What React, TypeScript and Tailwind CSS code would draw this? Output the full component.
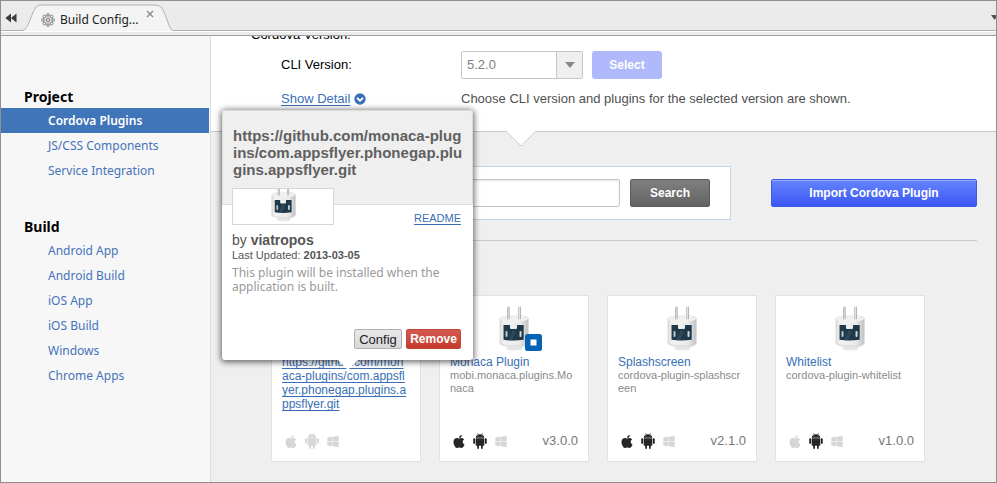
import { FaApple, FaWindows } from "react-icons/fa";

type Platform = "ios" | "android" | "windows";

interface Plugin {
  name: string;
  id?: string;
  version?: string;
  platforms: Platform[];
  official?: boolean;
  selected?: boolean;
}

const plugins: Plugin[] = [
  { name: "https://github.com/monaca-plugins/com.appsflyer.phonegap.plugins.appsflyer.git", platforms: [], selected: true },
  { name: "Monaca Plugin", id: "mobi.monaca.plugins.Monaca", version: "v3.0.0", platforms: ["ios", "android"], official: true },
  { name: "Splashscreen", id: "cordova-plugin-splashscreen", version: "v2.1.0", platforms: ["ios", "android"] },
  { name: "Whitelist", id: "cordova-plugin-whitelist", version: "v1.0.0", platforms: ["android"] },
];

const menu = [
  { title: "Project", items: ["Cordova Plugins", "JS/CSS Components", "Service Integration"] },
  { title: "Build", items: ["Android App", "Android Build", "iOS App", "iOS Build", "Windows", "Chrome Apps"] },
];

function Plug({ className }: { className: string }) {
  return (
    <svg viewBox="0 0 30 45" className={className} aria-hidden="true">
      <defs>
        <linearGradient id="plug-body" x1="0" x2="1" y1="0" y2="0">
          <stop offset="0" stopColor="#d8d8d8" />
          <stop offset="0.15" stopColor="#f2f2f2" />
          <stop offset="0.7" stopColor="#ebebeb" />
          <stop offset="1" stopColor="#c0c0c0" />
        </linearGradient>
        <linearGradient id="plug-prong" x1="0" x2="1" y1="0" y2="0">
          <stop offset="0" stopColor="#a0a0a0" />
          <stop offset="0.5" stopColor="#e6e6e6" />
          <stop offset="1" stopColor="#8f8f8f" />
        </linearGradient>
        <linearGradient id="plug-base" x1="0" x2="0" y1="0" y2="1">
          <stop offset="0" stopColor="#cccccc" />
          <stop offset="1" stopColor="#f6f6f6" />
        </linearGradient>
      </defs>
      <path d="M7 39h17l-1.500 5q-7 2-14 0z" fill="url(#plug-base)" />
      <path d="M0.500 13q0-4 14.500-4t14.500 4v24q-1.500 4.500-14.500 4.500t-14.500-4.500z" fill="url(#plug-body)" />
      <path d="M0.500 36.500q3 3.500 14.500 3.500t14.500-3.500" fill="none" stroke="#d0d0d0" strokeWidth="0.700" />
      <ellipse cx="15" cy="12.500" rx="14" ry="3.200" fill="#f0f0f0" />
      <rect x="8" y="0.500" width="2.500" height="13" rx="1" fill="url(#plug-prong)" />
      <rect x="19.300" y="0.500" width="2.500" height="13" rx="1" fill="url(#plug-prong)" />
      <path d="M4.500 19h6.500v3q0 1 1 1h5q1 0 1-1v-3h6.700v14.700q-10.100 1.600-20.200 0z" fill="#20394a" />
      <path d="M13.500 24.500h4l-4.500 9.800-3.500-0.100z" fill="#3d5565" opacity="0.500" />
      <rect x="6.500" y="25" width="2" height="6" rx="1" fill="#bcc7cd" />
      <rect x="20.500" y="25" width="2" height="6" rx="1" fill="#d3dade" />
    </svg>
  );
}

function AndroidIcon({ className }: { className: string }) {
  return (
    <svg viewBox="0 0 14 16" className={className} fill="currentColor" aria-hidden="true">
      <path d="M4.300 0.200l1 1.500M9.700 0.200l-1 1.500" stroke="currentColor" strokeWidth="0.600" />
      <path d="M2.700 4.700q0.300-3.500 4.300-3.500t4.300 3.500z" />
      <path d="M2.700 5.300h8.600v6.700q0 0.800-0.800 0.800h-0.700v2.300q0 0.900-0.900 0.900t-0.900-0.900v-2.300h-2v2.300q0 0.900-0.900 0.900t-0.900-0.900v-2.300h-0.700q-0.800 0-0.800-0.800z" />
      <rect x="0.200" y="5.300" width="1.900" height="5.500" rx="0.900" />
      <rect x="11.900" y="5.300" width="1.900" height="5.500" rx="0.900" />
      <circle cx="5" cy="3.100" r="0.400" fill="#fff" />
      <circle cx="9" cy="3.100" r="0.400" fill="#fff" />
    </svg>
  );
}

function TabBar() {
  return (
    <header className="flex h-[30px] items-end border-b border-[#b0b0b0] bg-[#ebebeb] font-['Noto_Sans',sans-serif]">
      <button type="button" aria-label="Previous tabs" className="flex h-full w-[21px] items-center pt-1 pl-1">
        <svg viewBox="0 0 12 10" className="h-[10px] w-3" fill="#3c3c3c" aria-hidden="true">
          <path d="M6 0.500v9L0.300 5zM11.500 0.500v9L6 5z" />
        </svg>
      </button>
      <div className="relative -mb-px h-[27px] w-[152px]">
        <svg viewBox="0 0 152 27" className="absolute inset-0 h-full w-full" aria-hidden="true">
          <path d="M0 26.500C5 26 6 20 11.500 7.500C14 2 16 1 20 1H131C137 1 139 2 141.500 7C147 19 147 26 152 26.500V27H0z" fill="#f4f4f4" />
          <path d="M0 26.500C5 26 6 20 11.500 7.500C14 2 16 1 20 1H131C137 1 139 2 141.500 7C147 19 147 26 152 26.500" fill="none" stroke="#b0b0b0" />
        </svg>
        <div className="relative flex h-full items-center pt-1 pl-[19px]">
          <svg viewBox="0 0 14 14" className="h-[14px] w-[14px] shrink-0" fill="none" stroke="#7d7d7d" aria-hidden="true">
            <g fill="#f4f4f4" strokeWidth="0.900">
              <circle cx="7" cy="1.900" r="1.400" />
              <circle cx="10.600" cy="3.400" r="1.400" />
              <circle cx="12.100" cy="7" r="1.400" />
              <circle cx="10.600" cy="10.600" r="1.400" />
              <circle cx="7" cy="12.100" r="1.400" />
              <circle cx="3.400" cy="10.600" r="1.400" />
              <circle cx="1.900" cy="7" r="1.400" />
              <circle cx="3.400" cy="3.400" r="1.400" />
            </g>
            <circle cx="7" cy="7" r="4.200" fill="#e6e6e6" strokeWidth="0.800" />
            <path d="M7 3v8M3 7h8M4.200 4.200l5.600 5.600M9.800 4.200l-5.600 5.600" stroke="#a5a5a5" strokeWidth="0.700" />
            <circle cx="7" cy="7" r="1.500" fill="#f4f4f4" strokeWidth="0.900" />
          </svg>
          <span className="pl-[5px] text-[12px] leading-4 whitespace-nowrap text-[#222]">Build Config...</span>
          <button type="button" aria-label="Close tab" className="mb-3 ml-2">
            <svg viewBox="0 0 8 8" className="h-2 w-2" stroke="#8a8a8a" strokeWidth="1.400" aria-hidden="true">
              <path d="M1 1l6 6M7 1l-6 6" />
            </svg>
          </button>
        </div>
      </div>
      <svg viewBox="0 0 7 5" className="mb-[10px] -mr-[2px] ml-auto h-[5px] w-[7px]" fill="#555" aria-hidden="true">
        <path d="M0 0h7L3.500 5z" />
      </svg>
    </header>
  );
}

function Sidebar() {
  return (
    <nav className="w-[210px] shrink-0 border-r border-[#dcdcdc] bg-[#f7f7f7] pt-[50px] font-['Noto_Sans',sans-serif]">
      {menu.map((group) => (
        <section key={group.title} className="mb-[33px]">
          <h2 className="pl-[23px] text-[14px] leading-[22px] font-bold text-black">{group.title}</h2>
          <ul>
            {group.items.map((item) => (
              <li key={item}>
                <a
                  href="#"
                  className={
                    item === "Cordova Plugins"
                      ? "mr-px block bg-[#4175b9] pl-[47px] text-[12px] leading-[25px] font-semibold text-white"
                      : "block pl-[47px] text-[12px] leading-[25px] text-[#4573b9]"
                  }
                >
                  {item}
                </a>
              </li>
            ))}
          </ul>
        </section>
      ))}
    </nav>
  );
}

function VersionSection() {
  return (
    <section className="relative border-b border-[#c8c8c8] bg-white pt-px pb-[22px] pl-10">
      <h3 className="text-[13px] leading-5 text-black">Cordova Version:</h3>
      <div className="mt-[5px] flex h-[29px] items-center pl-[30px]">
        <label htmlFor="cli" className="w-[180px] text-[13px] text-black">
          CLI Version:
        </label>
        <div className="relative">
          <select
            id="cli"
            defaultValue="5.2.0"
            className="block h-7 w-[122px] appearance-none rounded-xs border border-[#c6c6c6] bg-white pl-[5px] text-[13px] text-[#808080]"
          >
            <option>5.2.0</option>
          </select>
          <span className="pointer-events-none absolute inset-y-px right-px flex w-[26px] items-center justify-center border-l border-[#c6c6c6] bg-[#efefef]">
            <svg viewBox="0 0 10 6" className="h-1.5 w-[10px]" fill="#888" aria-hidden="true">
              <path d="M0 0h10L5 6z" />
            </svg>
          </span>
        </div>
        <button type="button" className="ml-[9px] h-7 w-[70px] rounded-[3px] bg-[#b0b9fb] text-[12px] font-bold text-white">
          Select
        </button>
      </div>
      <div className="mt-[10px] flex items-center pl-[30px] text-[13px] leading-5">
        <div className="flex w-[180px] items-center gap-1">
          <a href="#" className="text-[#3a6fb7] underline underline-offset-2">
            Show Detail
          </a>
          <svg viewBox="0 0 12 12" className="h-3 w-3" aria-hidden="true">
            <circle cx="6" cy="6" r="5.700" fill="#3a6fb7" />
            <path d="M3 4.800l3 2.900 3-2.900" fill="none" stroke="#fff" strokeWidth="1.800" />
          </svg>
        </div>
        <p className="whitespace-nowrap text-[#505050]">Choose CLI version and plugins for the selected version are shown.</p>
      </div>
      <svg viewBox="0 0 30 16" className="absolute top-full left-[295px] h-4 w-[30px]" aria-hidden="true">
        <path d="M0 0L15 15L30 0z" fill="#fff" />
        <path d="M0 0L15 15L30 0" fill="none" stroke="#cfcfcf" />
      </svg>
    </section>
  );
}

function PluginPopup() {
  return (
    <aside className="absolute bottom-[101px] -left-[50px] z-10 flex h-[250px] w-[251px] flex-col rounded-[3px] bg-white text-[#555] shadow-[0_1px_6px_1px_rgba(0,0,0,0.6)]">
      <div className="h-[95px] rounded-t-[3px] border border-[#dcdcdc] bg-[#efefef] pt-4 pr-2 pl-[10px]">
        <h4 className="text-[15px] leading-[17px] font-bold break-all text-[#606060]">
          https://github.com/monaca-plugins/com.appsflyer.phonegap.plugins.appsflyer.git
        </h4>
      </div>
      <div className="-mt-[17px] flex items-end justify-between pr-3 pl-[10px]">
        <div className="flex h-[37px] w-[102px] justify-center overflow-hidden border border-[#d6d6d6] bg-white">
          <Plug className="-mt-[5px] h-[38px] w-[25px]" />
        </div>
        <a href="#" className="text-[11px] leading-[14px] text-[#3a6fb7] underline underline-offset-2">
          README
        </a>
      </div>
      <div className="flex flex-1 flex-col pt-[7px] pr-3 pb-[11px] pl-[10px]">
        <p className="text-[14px] leading-4">
          by <b>viatropos</b>
        </p>
        <p className="text-[11px] leading-[14px]">
          Last Updated: <b>2013-03-05</b>
        </p>
        <p className="mt-1 mr-4 font-['Noto_Sans',sans-serif] text-[12px] leading-[14px] text-[#999]">
          This plugin will be installed when the application is built.
        </p>
        <div className="mt-auto flex justify-end gap-1 text-[13px]">
          <button type="button" className="h-5 w-12 rounded-xs border border-[#b0b0b0] bg-linear-to-b from-[#e8e8e8] to-[#d8d8d8] text-[#222]">
            Config
          </button>
          <button type="button" className="h-5 w-[55px] rounded-xs border border-[#c04438] bg-linear-to-b from-[#d45a50] to-[#c63a2b] text-[12px] font-bold text-white">
            Remove
          </button>
        </div>
      </div>
      <svg viewBox="0 0 20 10" className="absolute top-full left-1/2 h-[10px] w-5 -translate-x-1/2" aria-hidden="true">
        <path d="M0 0h20L10 10z" fill="#fff" />
      </svg>
    </aside>
  );
}

function PluginCard({ plugin }: { plugin: Plugin }) {
  const tone = (p: Platform) => (plugin.platforms.includes(p) ? "text-[#262626]" : "text-[#d6d6d6]");
  return (
    <article className="relative flex h-[167px] w-[150px] flex-col border border-[#e2e2e2] bg-white px-[10px] pt-[10px] pb-3">
      <div className="relative mx-auto h-[45px] w-[30px]">
        <Plug className="h-[45px] w-[30px]" />
        {plugin.official && (
          <svg viewBox="0 0 17 17" className="absolute -right-[13px] bottom-0 h-[17px] w-[17px]" aria-hidden="true">
            <rect width="17" height="17" rx="2.500" fill="#0464b4" />
            <rect x="5.500" y="5.500" width="6" height="6" fill="#fff" />
          </svg>
        )}
      </div>
      <a
        href="#"
        className={
          plugin.selected
            ? "mt-1 text-[12px] leading-[14px] break-all text-[#3a6fb7] underline underline-offset-2"
            : "mt-1 text-[12px] leading-[14px] break-all text-[#3a6fb7]"
        }
      >
        {plugin.name}
      </a>
      <p className="text-[11px] leading-[13px] break-all text-[#8a8a8a]">{plugin.id}</p>
      <div className="mt-auto flex items-center pl-[2px]">
        <FaApple className={`h-[15px] w-[14px] ${tone("ios")}`} />
        <AndroidIcon className={`ml-[7px] h-4 w-[14px] ${tone("android")}`} />
        <FaWindows className={`ml-2 h-[13px] w-3 ${tone("windows")}`} />
        <span className="ml-auto text-[13px] leading-4 text-[#777]">{plugin.version}</span>
      </div>
      {plugin.selected && <PluginPopup />}
    </article>
  );
}

export default function App() {
  return (
    <div className="flex h-screen flex-col overflow-hidden border border-[#8f8f8f] bg-[#efefef] font-['Liberation_Sans',Arial,sans-serif]">
      <TabBar />
      <div className="h-[5px] shrink-0 border-t border-b border-t-white border-b-[#9f9f9f] bg-[#ececec]" />
      <div className="flex min-h-0 flex-1">
        <Sidebar />
        <main className="min-w-0 flex-1 overflow-hidden">
          <div className="-mt-3">
            <VersionSection />
            <section className="pt-[34px] pr-[19px] pl-[60px]">
              <div className="flex items-center">
                <form className="flex w-[460px] items-center gap-[10px] border border-[#c5d5e9] bg-white px-5 py-3">
                  <input
                    type="text"
                    aria-label="Search plugins"
                    className="h-7 min-w-0 flex-1 rounded-xs border border-[#c6c6c6] bg-white px-2 text-[13px] shadow-[inset_0_1px_2px_rgba(0,0,0,0.1)]"
                  />
                  <button type="button" className="h-7 w-20 rounded-xs border border-[#5a5a5a] bg-linear-to-b from-[#808080] to-[#636363] text-[12px] font-bold text-white">
                    Search
                  </button>
                </form>
                <button type="button" className="ml-auto h-7 w-[206px] rounded-xs border border-[#3f59e8] bg-linear-to-b from-[#6684fb] to-[#3b55f5] text-[12px] font-bold text-white shadow-[inset_0_1px_0_rgba(255,255,255,0.3)]">
                  Import Cordova Plugin
                </button>
              </div>
              <hr className="mt-5 mb-[54px] border-[#cbcbcb]" />
              <div className="flex flex-wrap gap-[18px]">
                {plugins.map((plugin) => (
                  <PluginCard key={plugin.name} plugin={plugin} />
                ))}
              </div>
            </section>
          </div>
        </main>
      </div>
    </div>
  );
}
